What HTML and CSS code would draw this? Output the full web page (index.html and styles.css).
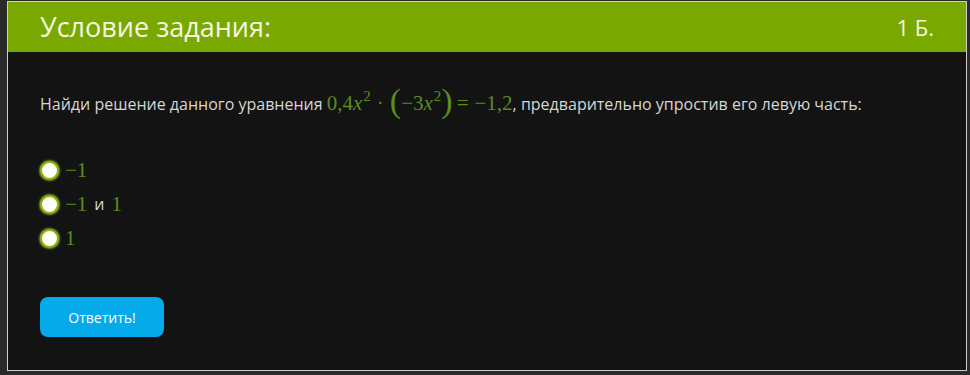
FILE: index.html
```html
<!DOCTYPE html>
<html lang="ru">
<head>
<meta charset="utf-8">
<link rel="stylesheet" href="styles.css">
</head>
<body>
<div class="card">
  <div class="header">
    <span class="title">Условие задания:</span>
    <span class="points">1 Б.</span>
  </div>
  <div class="content">
    <p class="question">Найди решение данного уравнения <span class="math">0,4<i>x</i><sup>2</sup><span class="op">·</span><span class="paren">(</span>−3<i>x</i><sup>2</sup><span class="paren">)</span><span class="eq">=</span>−1,2</span>, предварительно упростив его левую часть:</p>
    <div class="options">
      <label class="option"><span class="radio"></span><span class="math">−1</span></label>
      <label class="option"><span class="radio"></span><span class="math">−1</span><span class="and">и</span><span class="math">1</span></label>
      <label class="option"><span class="radio"></span><span class="math">1</span></label>
    </div>
    <button class="submit">Ответить!</button>
  </div>
</div>
</body>
</html>
```

FILE: styles.css
```css
html, body {
  margin: 0;
  padding: 0;
}
body {
  background: #2a2a2a;
  width: 970px;
  height: 375px;
  overflow: hidden;
  font-family: "Open Sans", "Noto Sans", sans-serif;
}
.card {
  margin: 1px 0 0 7px;
  width: 958px;
  height: 368px;
  border: 1px solid #cfcfcf;
  background: #131313;
}
.header {
  height: 50px;
  background: #79a800;
  display: flex;
  align-items: center;
  justify-content: space-between;
  padding: 0 32px 0 32px;
  color: #f4f6e4;
}
.title {
  font-size: 27px;
  margin-top: -1px;
}
.points {
  font-size: 22px;
}
.content {
  padding: 0 32px;
}
.question {
  margin: 38px 0 0 0;
  font-size: 16px;
  line-height: 26px;
  color: #d6d6d6;
}
.math {
  font-family: "Liberation Serif", "DejaVu Serif", serif;
  color: #5a8d1e;
  font-size: 21px;
}
.math i {
  font-style: italic;
  margin-right: 1px;
}
.math sup {
  font-size: 15px;
  vertical-align: 9px;
  line-height: 0;
}
.op {
  margin: 0 6px;
}
.paren {
  display: inline-block;
  font-size: 34px;
  line-height: 0;
  transform: translateY(2px);
  font-weight: 300;
}
.eq {
  margin: 0 6px 0 4px;
}
.options {
  margin-top: 42px;
  display: flex;
  flex-direction: column;
  gap: 12px;
}
.option {
  display: flex;
  align-items: center;
  height: 22px;
  line-height: 22px;
  gap: 6px;
}
.radio {
  width: 15px;
  height: 15px;
  border-radius: 50%;
  background: #ffffff;
  border: 2px solid #8ab800;
  box-shadow: 0 0 2px 1px rgba(200, 230, 80, 0.6);
}
.option .math {
  font-size: 21px;
}
.and {
  color: #d6d6d6;
  font-size: 16px;
  margin: 0 1px;
}
.submit {
  margin-top: 48px;
  width: 124px;
  height: 40px;
  border: none;
  border-radius: 8px;
  background: #05aaea;
  color: #ffffff;
  font-family: "Open Sans", "Noto Sans", sans-serif;
  font-size: 14px;
  padding: 0;
}
```
